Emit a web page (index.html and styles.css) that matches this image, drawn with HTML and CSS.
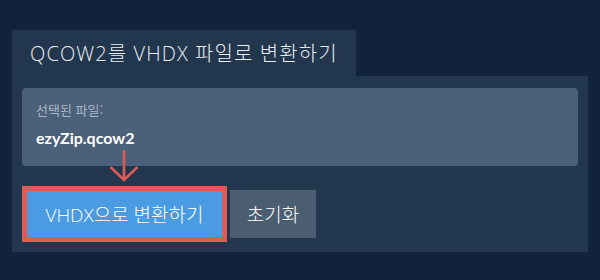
FILE: index.html
```html
<!DOCTYPE html>
<html lang="ko">
<head>
<meta charset="utf-8">
<link rel="stylesheet" href="styles.css">
</head>
<body>
<div class="wrap">
  <div class="tab"><h1 class="title">QCOW2를 VHDX 파일로 변환하기</h1></div>
  <div class="panel">
    <div class="filebox">
      <div class="label">선택된 파일:</div>
      <div class="fname">ezyZip.qcow2</div>
    </div>
    <div class="arrow">
      <svg width="30" height="34" viewBox="0 0 30 34"><path d="M15 0 V30 M1.5 17 L15 30 L28.5 17" fill="none" stroke="#de5c55" stroke-width="2.6"/></svg>
    </div>
    <div class="actions">
      <div class="hl"><button class="btn primary">VHDX으로 변환하기</button></div>
      <button class="btn reset">초기화</button>
    </div>
  </div>
</div>
</body>
</html>
```
FILE: styles.css
```css
html, body { margin: 0; padding: 0; }
body {
  background: #11233a;
  width: 600px;
  height: 280px;
  font-family: "Open Sans", "Noto Sans CJK KR", sans-serif;
  color: #fff;
}
.wrap { padding: 30px 12px 0 12px; }
.tab {
  display: inline-block;
  background: #22364d;
  height: 46px;
  padding: 0 18px 0 18px;
  box-sizing: border-box;
}
.title {
  margin: 0;
  font-weight: 300;
  font-size: 20px;
  line-height: 47px;
  color: #e9eef3;
  letter-spacing: 1.1px;
}
.panel {
  background: #22364d;
  height: 176px;
  padding: 12px 10px 0 10px;
  box-sizing: border-box;
}
.filebox {
  background: #4b6079;
  border-radius: 4px;
  height: 78px;
  padding: 13px 14px 0 14px;
  box-sizing: border-box;
}
.label {
  font-family: "Noto Sans CJK KR", sans-serif;
  font-size: 13px;
  color: #a9b6c4;
  line-height: 17px;
}
.fname {
  font-family: "Lato", "Noto Sans CJK KR", sans-serif;
  font-weight: 700;
  font-size: 16px;
  line-height: 20px;
  margin-top: 10px;
  color: #fff;
}
.arrow {
  height: 0;
  position: relative;
}
.arrow svg { position: absolute; left: 87px; top: -16px; }
.actions {
  display: flex;
  align-items: center;
  margin-top: 20px;
  gap: 3px;
}
.hl {
  border: 5px solid #de5c55;
  display: flex;
}
.btn {
  border: 0;
  font-family: "Open Sans", "Noto Sans CJK KR", sans-serif;
  font-size: 19px;
  font-weight: 300;
  color: #fff;
  padding: 0;
  height: 46px;
}
.primary {
  background: #4b9be3;
  width: 195px;
}
.reset {
  background: #4b5d70;
  width: 86px;
  height: 48px;
}
```
